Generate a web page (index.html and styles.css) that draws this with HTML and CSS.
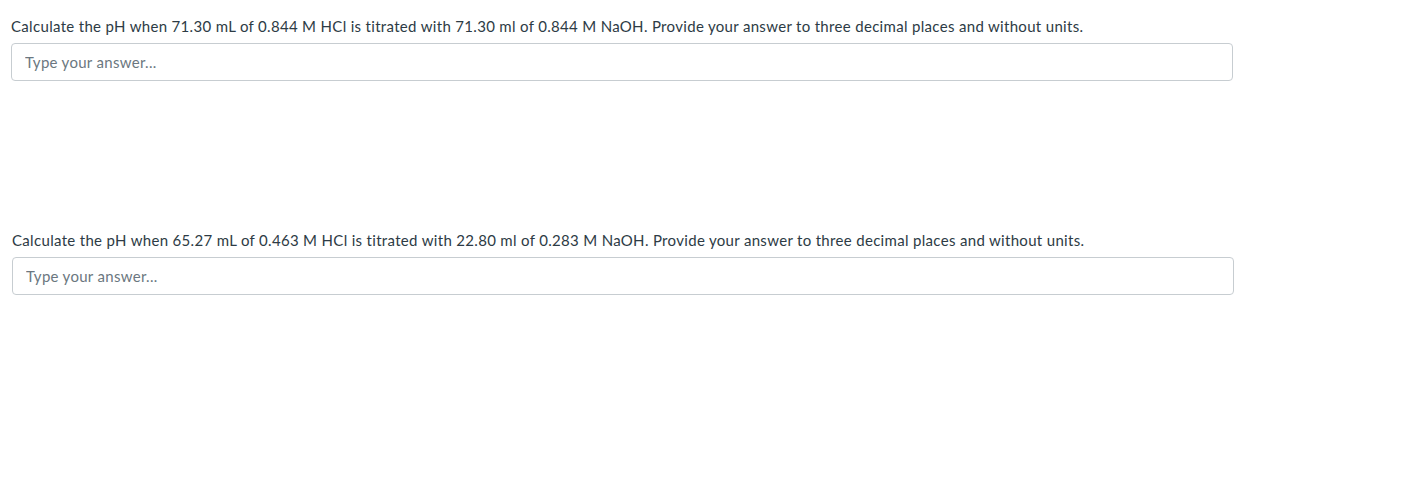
FILE: index.html
```html
<!DOCTYPE html>
<html>
<head>
<meta charset="utf-8">
<link rel="stylesheet" href="styles.css">
</head>
<body>
<div class="page">
  <div class="question q1">
    <div class="prompt">Calculate the pH when 71.30 mL of 0.844 M HCl is titrated with 71.30 ml of 0.844 M NaOH. Provide your answer to three decimal places and without units.</div>
    <input class="answer" type="text" placeholder="Type your answer...">
  </div>
  <div class="question q2">
    <div class="prompt">Calculate the pH when 65.27 mL of 0.463 M HCl is titrated with 22.80 ml of 0.283 M NaOH. Provide your answer to three decimal places and without units.</div>
    <input class="answer" type="text" placeholder="Type your answer...">
  </div>
</div>
</body>
</html>
```
FILE: styles.css
```css
html, body {
  margin: 0;
  padding: 0;
  background: #ffffff;
}
.page {
  font-family: Lato, "Liberation Sans", sans-serif;
  font-size: 15px;
  letter-spacing: 0.32px;
  font-variant-ligatures: none;
  color: #2d3b45;
  padding: 16px 0 0 11px;
  width: 1222px;
}
.question {
  display: flex;
  flex-direction: column;
  gap: 7px;
}
.q2 {
  margin-top: 149px;
  margin-left: 1px;
}
.prompt {
  line-height: 20px;
}
.answer {
  box-sizing: border-box;
  width: 1222px;
  height: 38px;
  border: 1px solid #c7cdd1;
  border-radius: 4px;
  padding: 0 13px;
  font-family: Lato, "Liberation Sans", sans-serif;
  font-size: 15px;
  letter-spacing: 0.3px;
  font-variant-ligatures: none;
  color: #2d3b45;
  outline: none;
  margin: 0;
}
.answer::placeholder {
  color: #6b7780;
  opacity: 1;
}
```
